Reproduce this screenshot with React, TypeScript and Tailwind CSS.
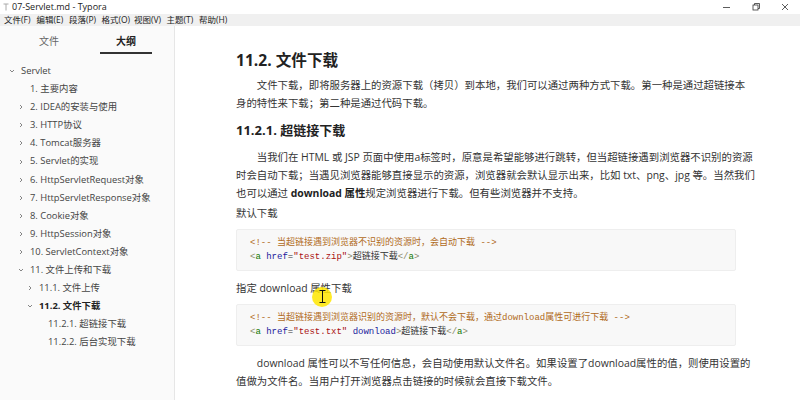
const cjk = { fontFamily: '"Open Sans", "Noto Sans CJK SC", sans-serif' };
const mono = { fontFamily: '"Liberation Mono", "Noto Sans CJK SC", monospace' };

type Item = { label: string; level: number; arrow?: 'right' | 'down'; active?: boolean };

const outline: Item[] = [
  { label: 'Servlet', level: 0, arrow: 'down' },
  { label: '1. 主要内容', level: 1 },
  { label: '2. IDEA的安装与使用', level: 1, arrow: 'right' },
  { label: '3. HTTP协议', level: 1, arrow: 'right' },
  { label: '4. Tomcat服务器', level: 1, arrow: 'right' },
  { label: '5. Servlet的实现', level: 1, arrow: 'right' },
  { label: '6. HttpServletRequest对象', level: 1, arrow: 'right' },
  { label: '7. HttpServletResponse对象', level: 1, arrow: 'right' },
  { label: '8. Cookie对象', level: 1, arrow: 'right' },
  { label: '9. HttpSession对象', level: 1, arrow: 'right' },
  { label: '10. ServletContext对象', level: 1, arrow: 'right' },
  { label: '11. 文件上传和下载', level: 1, arrow: 'down' },
  { label: '11.1. 文件上传', level: 2, arrow: 'right' },
  { label: '11.2. 文件下载', level: 2, arrow: 'down', active: true },
  { label: '11.2.1. 超链接下载', level: 3 },
  { label: '11.2.2. 后台实现下载', level: 3 },
];

const menus = ['文件(F)', '编辑(E)', '段落(P)', '格式(O)', '视图(V)', '主题(T)', '帮助(H)'];

function Chevron({ dir }: { dir: 'right' | 'down' }) {
  return (
    <svg width="6" height="6" viewBox="0 0 6 6" className="shrink-0">
      {dir === 'right' ? (
        <path d="M2 1 L4 3 L2 5" fill="none" stroke="#777" strokeWidth="0.9" />
      ) : (
        <path d="M1 2 L3 4 L5 2" fill="none" stroke="#777" strokeWidth="0.9" />
      )}
    </svg>
  );
}

function TitleBar() {
  return (
    <div className="flex h-[14px] items-center bg-white text-[9px] text-[#222]" style={cjk}>
      <svg width="6" height="8" viewBox="0 0 6 8" className="ml-[3px] mr-[3px]">
        <path d="M0.5 1 H5.5 M3 1 V7.5" stroke="#aaa" strokeWidth="1" />
      </svg>
      <span>07-Servlet.md - Typora</span>
      <div className="ml-auto flex items-center">
        <svg width="28" height="14" viewBox="0 0 28 14">
          <path d="M9 7.5 H16" stroke="#333" strokeWidth="0.8" />
        </svg>
        <svg width="28" height="14" viewBox="0 0 28 14">
          <rect x="11" y="5" width="5" height="5" fill="none" stroke="#333" strokeWidth="0.8" />
          <path d="M12.5 5 V3.5 H17.5 V8.5 H16" fill="none" stroke="#333" strokeWidth="0.8" />
        </svg>
        <svg width="30" height="14" viewBox="0 0 30 14">
          <path d="M12 4 L18 10 M18 4 L12 10" stroke="#333" strokeWidth="0.8" />
        </svg>
      </div>
    </div>
  );
}

function MenuBar() {
  return (
    <div className="flex h-[12px] items-center gap-[5.5px] bg-[#f0f0f0] pl-[4px] text-[8.5px] text-[#222]" style={cjk}>
      {menus.map((m) => (
        <span key={m} className="w-[27px] whitespace-nowrap">
          {m}
        </span>
      ))}
    </div>
  );
}

function Sidebar() {
  return (
    <div className="w-[175px] shrink-0 border-r border-[#e6e6e6] bg-[#fafafa]" style={cjk}>
      <div className="flex h-[28px] items-end text-[10px]">
        <div className="w-[100px] pb-[5px] pl-[39px] text-[#666]">文件</div>
        <div className="flex w-[52px] flex-col items-center text-[#222] font-semibold">
          <span className="pb-[3px]">大纲</span>
          <div className="h-[2px] w-full bg-[#333]" />
        </div>
      </div>
      <div className="pt-[8px] text-[9.4px] text-[#444]">
        {outline.map((it) => (
          <div
            key={it.label}
            className={`flex h-[18.1px] items-center whitespace-nowrap ${it.active ? 'font-bold text-[#222]' : ''}`}
            style={{ paddingLeft: 9 + it.level * 9 }}
          >
            <span className="flex w-[12px] items-center">{it.arrow && <Chevron dir={it.arrow} />}</span>
            <span>{it.label}</span>
          </div>
        ))}
      </div>
    </div>
  );
}

const C = {
  comment: 'text-[#b06a1a]',
  bracket: 'text-[#8a8a6a]',
  tag: 'text-[#117700]',
  attr: 'text-[#1a1a9c]',
  str: 'text-[#a11]',
};

function Code({ children }: { children: React.ReactNode }) {
  return (
    <div className="rounded-[2px] border border-[#eeeeee] bg-[#f8f8f8] py-[6px] pl-[13px] text-[9px] leading-[14px] text-[#333]" style={mono}>
      {children}
    </div>
  );
}

function Content() {
  return (
    <div className="relative flex-1 bg-white" style={cjk}>
      <div className="ml-[61px] w-[500px] pt-[24px] text-[10.4px] leading-[18px] text-[#333]">
        <h2 className="text-[15.6px] font-bold leading-[20px] text-[#222]">11.2. 文件下载</h2>
        <p className="mt-[6px] whitespace-nowrap">
          <span className="block pl-[20.8px]">文件下载，即将服务器上的资源下载（拷贝）到本地，我们可以通过两种方式下载。第一种是通过超链接本</span>
          <span className="block">身的特性来下载；第二种是通过代码下载。</span>
        </p>
        <h3 className="mt-[9px] text-[13px] font-bold leading-[18px] text-[#222]">11.2.1. 超链接下载</h3>
        <p className="mt-[9px] whitespace-nowrap">
          <span className="block pl-[20.8px]">当我们在 HTML 或 JSP 页面中使用a标签时，原意是希望能够进行跳转，但当超链接遇到浏览器不识别的资源</span>
          <span className="block">时会自动下载；当遇见浏览器能够直接显示的资源，浏览器就会默认显示出来，比如 txt、png、jpg 等。当然我们</span>
          <span className="block">
            也可以通过 <b className="text-[#222]">download 属性</b>规定浏览器进行下载。但有些浏览器并不支持。
          </span>
        </p>
        <p className="mt-[2px]">默认下载</p>
        <div className="mt-[7px]">
          <Code>
            <div className={`whitespace-nowrap ${C.comment}`}>&lt;!-- 当超链接遇到浏览器不识别的资源时，会自动下载 --&gt;</div>
            <div className="whitespace-nowrap">
              <span className={C.bracket}>&lt;</span>
              <span className={C.tag}>a</span> <span className={C.attr}>href</span>=
              <span className={C.str}>"test.zip"</span>
              <span className={C.bracket}>&gt;</span>超链接下载<span className={C.bracket}>&lt;/</span>
              <span className={C.tag}>a</span>
              <span className={C.bracket}>&gt;</span>
            </div>
          </Code>
        </div>
        <p className="mt-[8px]">指定 download 属性下载</p>
        <div className="mt-[7px]">
          <Code>
            <div className={`whitespace-nowrap ${C.comment}`}>
              &lt;!-- 当超链接遇到浏览器识别的资源时，默认不会下载，通过download属性可进行下载 --&gt;
            </div>
            <div className="whitespace-nowrap">
              <span className={C.bracket}>&lt;</span>
              <span className={C.tag}>a</span> <span className={C.attr}>href</span>=
              <span className={C.str}>"test.txt"</span> <span className={C.attr}>download</span>
              <span className={C.bracket}>&gt;</span>超链接下载<span className={C.bracket}>&lt;/</span>
              <span className={C.tag}>a</span>
              <span className={C.bracket}>&gt;</span>
            </div>
          </Code>
        </div>
        <p className="mt-[8px] whitespace-nowrap">
          <span className="block pl-[20.8px]">download 属性可以不写任何信息，会自动使用默认文件名。如果设置了download属性的值，则使用设置的</span>
          <span className="block">值做为文件名。当用户打开浏览器点击链接的时候就会直接下载文件。</span>
        </p>
      </div>
      {/* mouse cursor highlight */}
      <div className="absolute left-[137px] top-[261px] h-[20px] w-[20px] rounded-full bg-[#ffe600]/85" />
      <svg className="absolute left-[144px] top-[264px]" width="7" height="13" viewBox="0 0 7 13">
        <path d="M0.5 0.5 H6.5 M3.5 0.5 V12.5 M0.5 12.5 H6.5" stroke="#111" strokeWidth="1" fill="none" />
      </svg>
    </div>
  );
}

export default function App() {
  return (
    <div className="flex h-[400px] w-[800px] flex-col overflow-hidden bg-white">
      <TitleBar />
      <MenuBar />
      <div className="flex min-h-0 flex-1">
        <Sidebar />
        <Content />
      </div>
    </div>
  );
}
